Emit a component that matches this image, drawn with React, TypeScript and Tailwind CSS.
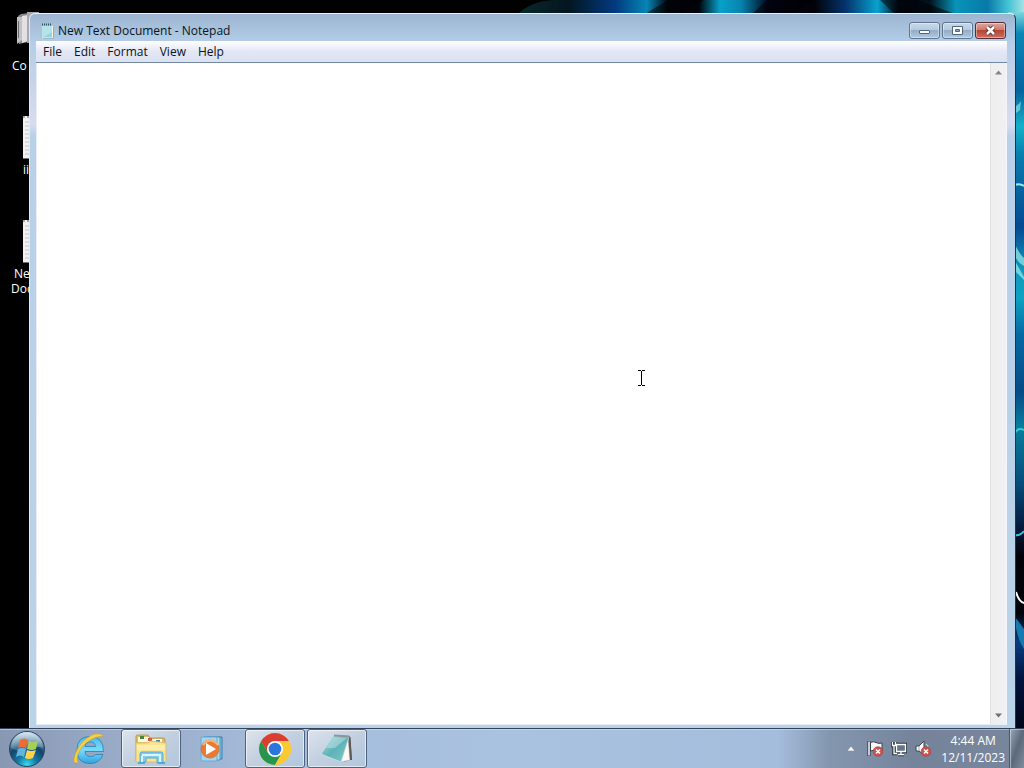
import type { ReactNode } from "react";

const menus = ["File", "Edit", "Format", "View", "Help"];

export default function App() {
  return (
    <div className="flex h-screen flex-col overflow-hidden bg-black font-['Open_Sans','Noto_Sans',sans-serif] text-xs text-black">
      <main className="relative min-h-0 flex-1 overflow-hidden">
        <Wallpaper />
        <DesktopIcons />
        <NotepadWindow />
      </main>
      <Taskbar />
    </div>
  );
}

function NotepadWindow() {
  return (
    <section className="absolute top-[13px] right-[8px] bottom-0 left-[29px] flex flex-col rounded-t-md border-t border-r border-l border-t-[#e8f2fb] border-r-[#173848] border-l-[#dcebf7] bg-[linear-gradient(180deg,#9db5d0_0px,#b3cde8_28px,#c3d2e9_60px,#d8dcf0_110px,#b9d1e8_122px,#b9d3e8_100%)] pr-[8px] pb-[3px] pl-[6px]">
      <header className="flex h-[27px] flex-shrink-0 items-center pt-[6px] pr-px">
        <NotepadSmallIcon />
        <h1 className="flex-1 text-xs leading-4 text-[#0a1420]">New Text Document - Notepad</h1>
        <div className="flex gap-[2px]">
          <CaptionButton label="Minimize">
            <rect x="10.500" y="8.500" width="10" height="3" rx=".5" fill="#fff" stroke="#53657d" />
          </CaptionButton>
          <CaptionButton label="Maximize">
            <path d="M10.500 4.500h10v8h-10z M13.500 7.500h4v2h-4z" fill="#fff" fillRule="evenodd" stroke="#53657d" />
          </CaptionButton>
          <CaptionButton label="Close" close>
            <path d="M12 5l7 7M19 5l-7 7" stroke="#54333b" strokeWidth="4.500" />
            <path d="M12 5l7 7M19 5l-7 7" stroke="#fff" strokeWidth="2.500" />
          </CaptionButton>
        </div>
      </header>

      <nav className="flex h-[22px] flex-shrink-0 items-center border-b border-[#7288a5] bg-linear-to-b from-white via-[#e3e7f5] to-[#dce2f1] pl-px">
        {menus.map((name) => (
          <button key={name} className="px-[6px] leading-5 text-[#0b1220]">
            {name}
          </button>
        ))}
      </nav>

      <div className="relative flex min-h-0 flex-1 border-r border-b border-l border-r-[#f3f6fb] border-b-[#e9eef6] border-l-[#e9eef6] bg-white">
        <textarea
          aria-label="Document text"
          spellCheck={false}
          className="min-w-0 flex-1 resize-none bg-white p-1 outline-none"
        />
        <div className="flex w-4 flex-shrink-0 flex-col justify-between border-l border-[#e3e3e3] bg-linear-to-r from-[#eeeeee] to-[#f1f1f5]">
          <button aria-label="Scroll up" className="flex h-[18px] w-full items-center justify-center">
            <svg width="7" height="5" viewBox="0 0 7 5">
              <path d="M0 4.500L3.500 .5l3.500 4z" fill="#858585" />
            </svg>
          </button>
          <button aria-label="Scroll down" className="flex h-[18px] w-full items-center justify-center">
            <svg width="7" height="5" viewBox="0 0 7 5">
              <path d="M0 .5l3.500 4 3.500-4z" fill="#707070" />
            </svg>
          </button>
        </div>
        {/* text cursor */}
        <svg className="absolute top-[307px] left-[601px]" width="7" height="16" viewBox="0 0 7 16">
          <path d="M0 .5h3M4 .5h3M3.500 1v14M0 15.500h3M4 15.500h3" stroke="#000" fill="none" />
        </svg>
      </div>
    </section>
  );
}

interface CaptionButtonProps {
  label: string;
  close?: boolean;
  children: ReactNode;
}

function CaptionButton({ label, close, children }: CaptionButtonProps) {
  const colors = close
    ? "border-[#552c37] bg-[linear-gradient(180deg,#dda79e_0%,#cd7668_48%,#b94431_50%,#cb7160_100%)]"
    : "border-[#60748e] bg-[linear-gradient(180deg,#c7d8ea_0%,#b5c9df_48%,#93adc9_50%,#b0c9e2_100%)]";
  return (
    <button
      aria-label={label}
      className={`flex h-[17px] w-[31px] items-center justify-center rounded-[3px] border shadow-[inset_0_0_0_1px_rgba(255,255,255,0.4)] ${colors}`}
    >
      <svg className="flex-shrink-0" width="31" height="17" viewBox="0 0 31 17" fill="none">
        {children}
      </svg>
    </button>
  );
}

function NotepadSmallIcon() {
  return (
    <svg className="mr-1 ml-1 flex-shrink-0" width="14" height="16" viewBox="0 0 14 16">
      <path d="M1 2.500h11.500v12H1z" fill="#98d3dc" stroke="#a9c6cd" />
      <path d="M2 3h10v6L4 14H2z" fill="#b4e4ea" />
      <path d="M12.500 3v12H2" fill="none" stroke="#f3f7e6" />
      <path d="M13.500 4v11.500H3" fill="none" stroke="#7d929b" strokeWidth=".5" />
      <path d="M2 1.500h10" stroke="#36545f" strokeWidth="2" strokeDasharray="1 1" />
    </svg>
  );
}

function DesktopIcons() {
  return (
    <div className="absolute top-0 left-0 flex flex-col leading-[15px] text-white">
      <DesktopItem label={<span className="pl-3">Co</span>}>
        <path d="M3 6l3-2 16-2v28L4 34z" fill="#8b888d" />
        <path d="M2 7h5v23l-5 4z" fill="#c3c0c5" />
        <path d="M7 6l6-1v26l-6 2z" fill="#e3e1e4" />
        <path d="M12 2h12v30l-12 1z" fill="#aaa7ae" />
        <path d="M3.500 11v17" stroke="#6c696f" />
      </DesktopItem>
      <DesktopItem label={<span className="pl-[23px]">ii</span>}>
        <DocumentShape />
      </DesktopItem>
      <DesktopItem
        label={
          <>
            <span className="pl-[14px]">Ne</span>
            <span className="pl-[11px]">Doc</span>
          </>
        }
      >
        <DocumentShape />
      </DesktopItem>
    </div>
  );
}

function DesktopItem({ label, children }: { label: ReactNode; children: ReactNode }) {
  return (
    <a href="#" className="flex h-[104px] flex-col pt-[10px]">
      <svg className="ml-[15px] flex-shrink-0" width="48" height="48" viewBox="0 0 48 48">
        {children}
      </svg>
      <span className="flex flex-col">{label}</span>
    </a>
  );
}

function DocumentShape() {
  return (
    <g>
      <path d="M8 2h32v43H8z" fill="#f2f2f1" />
      <path d="M10 8h28M10 12h28M10 16h28M10 20h28M10 24h28M10 28h28M10 32h28M10 36h28M10 40h28" stroke="#b9c4cb" />
      <path d="M8 3h32" stroke="#a3a5a4" strokeWidth="2" strokeDasharray="2 2" />
      <path d="M8 44.500h32" stroke="#68747a" />
    </g>
  );
}

function Wallpaper() {
  return (
    <svg className="absolute inset-0 h-full w-full" viewBox="0 0 1024 728" preserveAspectRatio="xMaxYMin slice">
      <defs>
        <linearGradient id="top" x1="500" x2="1024" y1="0" y2="0" gradientUnits="userSpaceOnUse">
          <stop offset="0" stopColor="#000" />
          <stop offset=".04" stopColor="#08282b" />
          <stop offset=".13" stopColor="#04151f" />
          <stop offset=".22" stopColor="#023a80" />
          <stop offset=".28" stopColor="#0785b5" />
          <stop offset=".32" stopColor="#010713" />
          <stop offset=".38" stopColor="#00050c" />
          <stop offset=".42" stopColor="#08a1cb" />
          <stop offset=".46" stopColor="#0784ad" />
          <stop offset=".51" stopColor="#020922" />
          <stop offset=".6" stopColor="#020208" />
          <stop offset=".66" stopColor="#04346e" />
          <stop offset=".72" stopColor="#08a2cf" />
          <stop offset=".76" stopColor="#010b1c" />
          <stop offset=".82" stopColor="#02121e" />
          <stop offset=".87" stopColor="#0794b9" />
          <stop offset=".93" stopColor="#0879a8" />
          <stop offset=".97" stopColor="#43c3d4" />
          <stop offset="1" stopColor="#a6e2e5" />
        </linearGradient>
        <linearGradient id="side" x1="0" x2="0" y1="0" y2="1">
          <stop offset="0" stopColor="#7bd6df" />
          <stop offset=".03" stopColor="#0b86b7" />
          <stop offset=".11" stopColor="#04649d" />
          <stop offset=".16" stopColor="#14b1c9" />
          <stop offset=".2" stopColor="#087dae" />
          <stop offset=".3" stopColor="#044a91" />
          <stop offset=".36" stopColor="#1098bd" />
          <stop offset=".4" stopColor="#0ca2c1" />
          <stop offset=".45" stopColor="#0569a3" />
          <stop offset=".53" stopColor="#064b86" />
          <stop offset=".58" stopColor="#087e9c" />
          <stop offset=".66" stopColor="#064b79" />
          <stop offset=".72" stopColor="#07193c" />
          <stop offset=".76" stopColor="#010308" />
          <stop offset=".84" stopColor="#01040b" />
          <stop offset=".88" stopColor="#083e81" />
          <stop offset=".93" stopColor="#03143e" />
          <stop offset="1" stopColor="#010517" />
        </linearGradient>
      </defs>
      <rect width="1024" height="728" fill="#000" />
      <path d="M519 13C530 3 545 0 555 0H1024V20H519z" fill="url(#top)" />
      <path d="M668 0l-23 14h38L704 0zM767 0l-15 14h43l17-14zM880 0l15 14h60L918 0z" fill="#000" opacity=".55" />
      <rect x="1008" y="12" width="16" height="716" fill="url(#side)" />
      <path d="M1015 185q5-2 9 1" stroke="#9de8ed" strokeWidth="2" fill="none" />
      <path d="M1015 244q4 10 9 14v8q-6-3-9-10zM1015 261l9 16v3l-9-9z" fill="#8ce1e4" opacity=".8" />
      <path d="M1015 106q3 0 6-5l-1 9q-3 3-5 3z" fill="#a3edee" opacity=".6" />
      <path d="M1015 433q3-6 9-3M1015 535q5 1 9-4" stroke="#35c8d6" strokeWidth="2" fill="none" />
      <path d="M1016 592q3 10 8 11" stroke="#fff" strokeWidth="2" fill="none" />
      <path d="M1015 617l9 12v20q-6-8-9-26z" fill="#1879ae" />
    </svg>
  );
}

function Taskbar() {
  return (
    <footer className="relative flex h-10 flex-shrink-0 border-t border-[#33435b] bg-[linear-gradient(90deg,#8898b3_0%,#98a9c5_10%,#a5bddc_28%,#a9c2df_50%,#a4bddc_76%,#8496af_81%,#75849b_89%,#77869c_100%)] shadow-[inset_0_1px_0_rgba(220,230,245,0.5)]">
      <button aria-label="Start" className="flex w-[59px] items-center pl-2">
        <StartOrb />
      </button>
      <nav className="flex gap-[2px]">
        <TaskButton label="Internet Explorer">
          <ExplorerE />
        </TaskButton>
        <TaskButton label="Windows Explorer" open>
          <Folder />
        </TaskButton>
        <TaskButton label="Media Player">
          <MediaPlayer />
        </TaskButton>
        <TaskButton label="Chrome" open>
          <Chrome />
        </TaskButton>
        <TaskButton label="Notepad" open>
          <NotepadLarge />
        </TaskButton>
      </nav>
      <div className="flex-1" />
      <div className="flex items-center gap-2">
        <button aria-label="Show hidden icons" className="mr-1">
          <svg width="8" height="5" viewBox="0 0 8 5">
            <path d="M0 5l4-5 4 5z" fill="#f2f6fb" stroke="#566477" strokeWidth=".4" />
          </svg>
        </button>
        <TrayButton label="Action Center">
          <path d="M2 1v15" stroke="#25303d" strokeWidth="3" />
          <path d="M2 1.500v14" stroke="#fff" strokeWidth="1.500" />
          <path d="M3.500 2.500q3-1.500 5.500 0t6 .5v8q-4 1.500-6 0t-5.500 0z" fill="#f7f8fa" stroke="#37424f" />
          <TrayCross />
        </TrayButton>
        <TrayButton label="Network">
          <path d="M5.500 4.500h9v7h-9zM7 14.500h6M10 12v2M1.500 2v3.500h3V2M3 6v7.500h3" fill="none" stroke="#273443" strokeWidth="3.500" />
          <path d="M5.500 4.500h9v7h-9z" fill="#65758a" stroke="#fff" strokeWidth="1.300" />
          <path d="M7 14.500h6M10 12v2M1.500 2v3.500h3V2M3 6v7.500h3" fill="none" stroke="#fff" strokeWidth="1.300" />
        </TrayButton>
        <TrayButton label="Volume">
          <path d="M1 6h3l5-5v14l-5-4H1z" fill="#f8f9fb" stroke="#3b4654" />
          <path d="M4 6v5" stroke="#9aa7b5" />
          <path d="M11 4q2 1 2 3" stroke="#d8e0e8" fill="none" />
          <TrayCross />
        </TrayButton>
      </div>
      <time className="pt-[3px] pr-1 pl-[10px] text-center text-xs leading-[17px] text-white">
        4:44 AM
        <br />
        12/11/2023
      </time>
      <button
        aria-label="Show desktop"
        className="w-[15px] border-l border-[#4c596b] bg-linear-to-br from-[#9aa8ba] via-[#5c697b] to-[#7f8da0] shadow-[inset_1px_1px_0_rgba(225,235,245,0.5)]"
      />
    </footer>
  );
}

interface TaskButtonProps {
  label: string;
  open?: boolean;
  children: ReactNode;
}

function TaskButton({ label, open, children }: TaskButtonProps) {
  const frame = open
    ? "border-[#4f617c] bg-linear-to-br from-[#dce4ee] via-[#c2cfdf] to-[#b1c7e0] shadow-[inset_0_0_0_1px_rgba(255,255,255,0.6)]"
    : "border-transparent";
  return (
    <button
      aria-label={label}
      className={`flex w-[60px] items-center justify-center rounded-[3px] border ${frame}`}
    >
      {children}
    </button>
  );
}

function TrayButton({ label, children }: { label: string; children: ReactNode }) {
  return (
    <button aria-label={label}>
      <svg width="16" height="17" viewBox="0 0 16 17">
        {children}
      </svg>
    </button>
  );
}

function TrayCross() {
  return (
    <g>
      <circle cx="11" cy="11.500" r="4.800" fill="#d2524a" stroke="#a83a38" strokeWidth=".6" />
      <path d="M9 9.500l4 4M13 9.500l-4 4" stroke="#fff" strokeWidth="1.500" />
    </g>
  );
}

function StartOrb() {
  return (
    <svg width="38" height="38" viewBox="0 0 38 38">
      <defs>
        <radialGradient id="orb" cx=".5" cy=".95" r=".9">
          <stop offset="0" stopColor="#38dcec" />
          <stop offset=".3" stopColor="#147ca7" />
          <stop offset=".62" stopColor="#12436c" />
          <stop offset="1" stopColor="#8fb1c9" />
        </radialGradient>
        <linearGradient id="gloss" x1="0" x2="0" y1="0" y2="1">
          <stop offset="0" stopColor="#e8f3f8" stopOpacity=".8" />
          <stop offset="1" stopColor="#a2c2d5" stopOpacity=".25" />
        </linearGradient>
      </defs>
      <circle cx="19" cy="19" r="17.500" fill="url(#orb)" stroke="#26435f" />
      <path d="M3 18a16 16 0 0 1 32 0q-8-3-16 1T3 18z" fill="url(#gloss)" />
      <path d="M12 10q4-3 8 0l-2 8q-4-2-8 0z" fill="#ed6b35" />
      <path d="M21 11q4 2 9 0l-2 8q-4 2-9 0z" fill="#a5cf58" />
      <path d="M10 19q4-2 8 0l-2 8q-4-3-8 0z" fill="#63b5df" />
      <path d="M19 20q4 2 9 0l-3 8q-4 2-8 0z" fill="#ffd44c" />
    </svg>
  );
}

function ExplorerE() {
  return (
    <svg width="32" height="34" viewBox="0 0 32 34">
      <defs>
        <linearGradient id="ie" x1="0" x2="0" y1="0" y2="1">
          <stop offset="0" stopColor="#4fb7e6" />
          <stop offset=".5" stopColor="#79dafa" />
          <stop offset="1" stopColor="#30a3dd" />
        </linearGradient>
      </defs>
      <path
        d="M30.500 19.500H12q.5 5 5.500 5 3.500 0 5-2h7.500Q27 31.500 17 31.500 4 31.500 4 18T17 4.500q13.500 0 13.500 15zM12 14.500h10.500q-.5-4.500-5-4.500T12 14.500z"
        fill="url(#ie)"
        fillRule="evenodd"
        stroke="#2181b8"
        strokeWidth=".8"
      />
      <path
        d="M31 4Q26 0 19 3 9 8 4 18-1 29 2 31q3 0 4-2-2 1-2-2 1-9 9-16Q22 4 31 4z"
        fill="#f5cf45"
        stroke="#c99b29"
        strokeWidth=".5"
      />
    </svg>
  );
}

function Folder() {
  return (
    <svg width="34" height="32" viewBox="0 0 34 32">
      <path d="M2 8V3q0-1 2-1h10l2 3h13q2 0 2 2v21H2z" fill="#dfbd5b" stroke="#b99c55" />
      <path d="M4 4h11v5H4z" fill="#fffbe1" />
      <path d="M6 3h4v3H6z" fill="#44883f" />
      <path d="M13 6h15v4H13z" fill="#fffbe1" />
      <path d="M14 5h4v3h-4z" fill="#d55a3e" />
      <path d="M22 7h4v2h-4z" fill="#477fb1" />
      <path d="M2 10h12l3-2 15 2v19H2z" fill="#f7e491" stroke="#d9c077" />
      <path d="M3 12h28v5H3z" fill="#fff1b2" opacity=".7" />
      <path d="M6 29V21q0-2 2-2h19q2 0 2 2v9h-6v-5H12v4z" fill="#84cce8" stroke="#5da8cd" />
      <path d="M8 22h19M8 23v6M26 23v6" stroke="#d8f4fc" strokeWidth="2" fill="none" />
      <path d="M4 30h7M24 30h7" stroke="#4cabda" strokeWidth="2" />
    </svg>
  );
}

function MediaPlayer() {
  return (
    <svg width="30" height="30" viewBox="0 0 30 30">
      <path d="M9 3h15v22H9z" fill="#80c5e7" stroke="#377faa" />
      <path d="M6 3h16v23H6z" fill="#afddf0" stroke="#4a93bc" />
      <path d="M3 3h16v24H3z" fill="#a4d5ee" stroke="#6aabd0" />
      <circle cx="12" cy="15" r="9" fill="#eb7932" stroke="#cf7a45" />
      <path d="M5 11q7-9 15 0" stroke="#f5b883" strokeWidth="2" fill="none" />
      <path d="M8 9l10 6-10 6z" fill="#fff" />
    </svg>
  );
}

function Chrome() {
  return (
    <svg width="32" height="32" viewBox="0 0 32 32">
      <circle cx="16" cy="16" r="16" fill="#fbc934" />
      <path d="M2.144 8A16 16 0 0 1 29.856 8H16L9.072 20z" fill="#dc3d32" />
      <path d="M2.144 8A16 16 0 0 0 16 32L22.928 20H9.072z" fill="#249650" />
      <path d="M16 8h13.856A16 16 0 0 1 16 32l6.928-12z" fill="#fbc934" />
      <circle cx="16" cy="16" r="8" fill="#fff" />
      <circle cx="16" cy="16" r="6.300" fill="#2b76dd" />
    </svg>
  );
}

function NotepadLarge() {
  return (
    <svg width="34" height="32" viewBox="0 0 34 32">
      <defs>
        <linearGradient id="page" x1="0" x2="1" y1="0" y2="1">
          <stop offset="0" stopColor="#b2dcdf" />
          <stop offset=".5" stopColor="#5eb2b7" />
          <stop offset="1" stopColor="#80cbc9" />
        </linearGradient>
      </defs>
      <path d="M14 2l16 1 2 23-8 3z" fill="#8f8b89" />
      <path d="M28 5l-7 24 9-2z" fill="#faf9f5" stroke="#a4a6a4" strokeWidth=".5" />
      <path d="M29.500 4l1.500 23" stroke="#5d5755" strokeWidth="2" />
      <path d="M13 3l16 1-8 25-20-8z" fill="url(#page)" stroke="#d8eeee" strokeWidth=".6" />
      <path d="M13 4l14 1-12 10-9 0z" fill="#d1edef" opacity=".4" />
      <path d="M14 2.500l15 1" stroke="#8b969a" strokeWidth="2" />
    </svg>
  );
}
